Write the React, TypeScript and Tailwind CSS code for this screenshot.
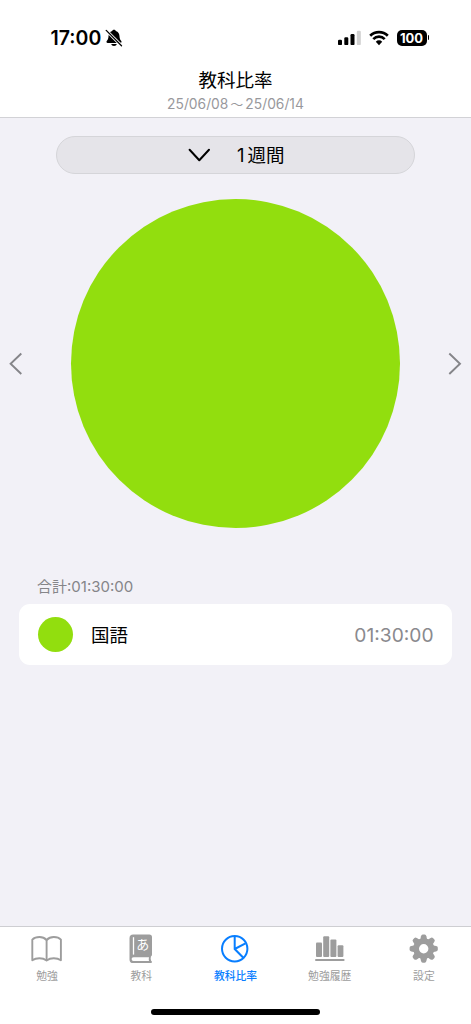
import type { ReactNode } from 'react'

const tabs: { label: string; icon: ReactNode; active?: boolean }[] = [
  { label: '勉強', icon: <BookOpenIcon /> },
  { label: '教科', icon: <SubjectBookIcon /> },
  { label: '教科比率', icon: <PieIcon />, active: true },
  { label: '勉強履歴', icon: <BarsIcon /> },
  { label: '設定', icon: <GearIcon /> },
]

function BookOpenIcon() {
  return (
    <svg width="32" height="30" viewBox="0 0 32 30" fill="none" stroke="currentColor" strokeWidth="1.9" strokeLinejoin="round">
      <path d="M15.600 6C13.600 3.900 11.200 3 8.600 3 5.600 3 3 3.900 1.300 5.600V26.300C3.200 25 5.600 24.300 8.400 24.300c2.800 0 5.200.7 7.200 2.200 2-1.500 4.400-2.200 7.200-2.200 2.800 0 5.200.7 7.100 2V5.600C28.400 3.900 25.800 3 22.800 3 20 3 17.600 3.900 15.600 6Z" />
      <path d="M15.600 6v20" />
    </svg>
  )
}

function SubjectBookIcon() {
  return (
    <span className="relative block h-[30px] w-6">
      <svg width="24" height="30" viewBox="0 0 24 30">
        <path
          fill="currentColor"
          d="M4.200 .5h16.100a2.700 2.700 0 0 1 2.700 2.700v17.300a2.500 2.500 0 0 1-1.100 2.100c-.4 1.500-.3 2.900.2 4.200.6.3.8.7.8 1.200 0 .7-.4 1.100-1.100 1.100H4.200A3.700 3.700 0 0 1 .5 25.400V4.200A3.700 3.700 0 0 1 4.200 .5Z"
        />
        <path d="M4.500 23.200h15.500a7 7 0 0 0 0 3.800H4.500a1.900 1.900 0 0 1 0-3.800Z" fill="white" />
        <path d="M4.500 3.200v17.400" stroke="white" strokeWidth="1.300" />
      </svg>
      <span className="absolute left-[7px] top-[3px] text-[13px] leading-[14px] text-white">あ</span>
    </span>
  )
}

function PieIcon() {
  return (
    <svg width="30" height="30" viewBox="0 0 30 30" fill="none" stroke="currentColor" strokeWidth="2">
      <circle cx="14.700" cy="14.700" r="12.700" />
      <path d="M14.700 2V15l8.600 8.800M14.700 15l10.800-5.700" />
    </svg>
  )
}

function BarsIcon() {
  return (
    <svg width="30" height="30" viewBox="0 0 30 30" fill="currentColor">
      <rect x="1" y="8.500" width="6" height="14.600" rx="1" />
      <rect x="8.200" y="2.200" width="6" height="20.900" rx="1" />
      <rect x="15.400" y="5.500" width="6" height="17.600" rx="1" />
      <rect x="22.600" y="11.300" width="5.800" height="11.800" rx="1" />
      <rect x="0" y="25" width="29.600" height="2.100" rx="1" />
    </svg>
  )
}

function GearIcon() {
  return (
    <svg width="30" height="30" viewBox="0 0 30 30">
      <circle cx="14.700" cy="14.700" r="7.600" fill="none" stroke="currentColor" strokeWidth="5.800" />
      {[0, 45, 90, 135, 180, 225, 270, 315].map((angle) => (
        <path
          key={angle}
          fill="currentColor"
          transform={`rotate(${angle} 14.7 14.7)`}
          d="M11.200 6 12 2.300Q12.400 .6 13.700 .6h2Q17 .6 17.400 2.300L18.200 6Z"
        />
      ))}
    </svg>
  )
}

function StatusBar() {
  return (
    <div className="flex h-[62px] items-start pl-[50.500px] pr-[42px] pt-[26px]">
      <span className="w-[52px] whitespace-nowrap text-[19.500px] font-semibold leading-[25px]">17:00</span>
      <svg className="ml-[2px] mt-[3px]" width="18" height="18" viewBox="0 0 18 18">
        <path d="M9 .8c.9 0 1.600.5 1.800 1.300 2.500.8 3.600 2.700 3.700 5.200.1 2.400.7 3.400 1.600 4.400.9 1 .4 2.300-.9 2.300H2.800c-1.300 0-1.800-1.300-.9-2.300.9-1 1.500-2 1.600-4.400.1-2.500 1.200-4.400 3.700-5.200C7.400 1.300 8.100.8 9 .8Z" />
        <path d="M6.200 15.100h5.600c-.3 1.200-1.400 1.900-2.800 1.900s-2.500-.7-2.800-1.900Z" />
        <path d="M1 1.200 17 17.200" stroke="white" strokeWidth="3" />
        <path d="M1.200 1.400 16.500 16.700" stroke="black" strokeWidth="1.300" strokeLinecap="round" />
      </svg>
      <svg className="ml-auto mt-1" width="24" height="16" viewBox="0 0 24 16">
        <rect x="0" y="9.800" width="4" height="5.300" rx="1.200" />
        <rect x="6.300" y="7.300" width="4" height="7.800" rx="1.200" />
        <rect x="12.500" y="4" width="4" height="11.100" rx="1.200" />
        <rect x="18.800" y="0.800" width="4" height="14.300" rx="1.200" fill="#d0d0d0" />
      </svg>
      <svg className="ml-[7px] mt-1" width="20" height="16" viewBox="0 0 20 16" fill="none" stroke="black" strokeWidth="2.700">
        <path d="M1.200 5.700a12.500 12.500 0 0 1 17.600 0" />
        <path d="M4.300 9.100a8 8 0 0 1 11.400 0" />
        <path d="M6.800 11.800a4.300 4.300 0 0 1 6.400 0L10 15.200Z" fill="black" stroke="none" />
      </svg>
      <div className="ml-[8px] mt-1 flex h-4 w-[30px] items-center justify-center rounded-[5px] bg-black text-[13px] font-bold leading-4 text-white">
        100
      </div>
      <div className="ml-px mt-[9px] h-[5px] w-[1.500px] rounded-r-full bg-black" />
    </div>
  )
}

export default function App() {
  return (
    <div className="flex h-[1024px] w-[471px] flex-col overflow-hidden bg-[#f2f1f7] font-['Inter','Noto_Sans_CJK_JP',sans-serif] text-black">
      <header className="h-[118px] border-b border-[#d2d2d6] bg-white">
        <StatusBar />
        <div className="flex flex-col items-center">
          <h1 className="mt-[5px] text-[18.500px] font-normal leading-[26px]">教科比率</h1>
          <p className="text-[13.800px] leading-[22px] text-[#98989c]">
            25/06/08<span className="mx-[2px] text-[13px]">～</span>25/06/14
          </p>
        </div>
      </header>

      <main className="flex-1">
        <button className="mx-auto mt-[18px] flex h-[38px] w-[359px] items-center rounded-full border border-[#d5d5d9] bg-[#e5e4e9] pl-[131px]">
          <svg width="24" height="14" viewBox="0 0 24 14" fill="none" stroke="black" strokeWidth="2" strokeLinecap="round" strokeLinejoin="round">
            <path d="M1.600 1.800 11.300 12.200 21 1.800" />
          </svg>
          <span className="ml-[25px] text-[18.500px] leading-6">
            <span className="mr-[3px]">1</span>週間
          </span>
        </button>

        <div className="mt-[25px] flex h-[329px] items-center justify-between px-[9px]">
          <svg width="14" height="24" viewBox="0 0 14 24" fill="none" stroke="#858589" strokeWidth="1.900">
            <path d="M12.300 1.500 1.600 11.700l10.700 10.300" />
          </svg>
          <div className="size-[329px] rounded-full bg-[#92de0e]" />
          <svg width="14" height="24" viewBox="0 0 14 24" fill="none" stroke="#858589" strokeWidth="1.900">
            <path d="M1.300 1.500 12 11.700 1.300 22" />
          </svg>
        </div>

        <section className="mt-12 px-[19px]">
          <p className="pl-[18px] text-[15px] leading-[22px] text-[#858589]">合計:01:30:00</p>
          <div className="mt-[6px] flex h-[61px] items-center rounded-[11px] bg-white px-[18.500px]">
            <span className="size-[35px] rounded-full bg-[#92de0e]" />
            <span className="ml-[18.500px] mt-px text-[18.500px] leading-7">国語</span>
            <span className="ml-auto mt-px text-[19.200px] leading-7 text-[#8a8a8e]">01:30:00</span>
          </div>
        </section>
      </main>

      <nav className="flex h-[98px] flex-col items-center border-t border-[#ceced2] bg-white">
        <ul className="grid w-full grid-cols-5 pt-[7px]">
          {tabs.map((tab) => (
            <li
              key={tab.label}
              className={`flex flex-col items-center ${tab.active ? 'font-medium text-[#087eff]' : 'text-[#9d9d9d]'}`}
            >
              {tab.icon}
              <span className="mt-[5px] text-[10.800px] leading-4">{tab.label}</span>
            </li>
          ))}
        </ul>
        <div className="mt-auto mb-[9px] h-[6px] w-[169px] rounded-full bg-black" />
      </nav>
    </div>
  )
}
